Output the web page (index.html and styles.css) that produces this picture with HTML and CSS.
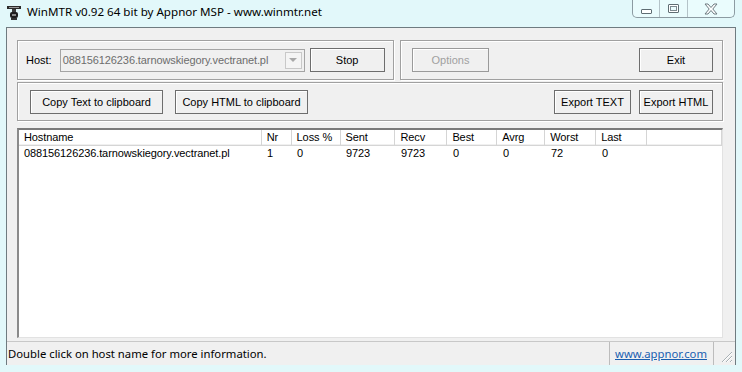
FILE: index.html
```html
<!DOCTYPE html>
<html lang="en">
<head>
  <meta charset="UTF-8" />
  <title>WinMTR v0.92 64 bit by Appnor MSP - www.winmtr.net</title>
  <link rel="stylesheet" href="styles.css">
</head>
<body>
  <div class="window">
    <div class="titlebar">
      <svg class="app-icon" width="16" height="16" viewBox="0 0 16 16">
        <rect x="1" y="2" width="14" height="3" fill="#2a2a2a"/>
        <rect x="3" y="3" width="10" height="1" fill="#9a9a9a"/>
        <rect x="6" y="5" width="4" height="3" fill="#3a3a3a"/>
        <rect x="4" y="8" width="8" height="6" rx="2" fill="#1e1e1e"/>
        <rect x="6" y="10" width="4" height="2" fill="#8a8a8a"/>
        <rect x="5" y="14" width="6" height="2" fill="#333"/>
      </svg>
      <span class="title">WinMTR v0.92 64 bit by Appnor MSP - www.winmtr.net</span>
      <div class="caption">
        <div class="cap min"><span class="min-glyph"></span></div>
        <div class="cap max"><span class="max-glyph"></span></div>
        <div class="cap close">
          <svg width="16" height="12" viewBox="0 0 16 12">
            <path d="M2 1 H5 L8 4.5 L11 1 H14 L9.8 6 L14 11 H11 L8 7.5 L5 11 H2 L6.2 6 Z" fill="#fff" stroke="#6d7a80" stroke-width="1"/>
          </svg>
        </div>
      </div>
    </div>

    <div class="client">
      <div class="row">
        <div class="group host-group">
          <span class="label">Host:</span>
          <div class="combo">
            <span class="combo-text">088156126236.tarnowskiegory.vectranet.pl</span>
            <span class="combo-btn"><span class="arrow"></span></span>
          </div>
          <button class="btn stop">Stop</button>
        </div>
        <div class="group opt-group">
          <button class="btn options" disabled>Options</button>
          <button class="btn exit">Exit</button>
        </div>
      </div>

      <div class="group copy-group">
        <button class="btn copy-text">Copy Text to clipboard</button>
        <button class="btn copy-html">Copy HTML to clipboard</button>
        <span class="spacer"></span>
        <button class="btn export-text">Export TEXT</button>
        <button class="btn export-html">Export HTML</button>
      </div>

      <div class="list">
        <div class="list-row list-head">
          <span class="c host">Hostname</span>
          <span class="c nr">Nr</span>
          <span class="c loss">Loss %</span>
          <span class="c sent">Sent</span>
          <span class="c recv">Recv</span>
          <span class="c best">Best</span>
          <span class="c avrg">Avrg</span>
          <span class="c worst">Worst</span>
          <span class="c last">Last</span>
          <span class="c rest"></span>
        </div>
        <div class="list-row">
          <span class="c host">088156126236.tarnowskiegory.vectranet.pl</span>
          <span class="c nr">1</span>
          <span class="c loss">0</span>
          <span class="c sent">9723</span>
          <span class="c recv">9723</span>
          <span class="c best">0</span>
          <span class="c avrg">0</span>
          <span class="c worst">72</span>
          <span class="c last">0</span>
        </div>
      </div>

      <div class="statusbar">
        <span class="status-text">Double click on host name for more information.</span>
        <span class="status-link"><a href="#">www.appnor.com</a></span>
        <svg class="grip" width="14" height="14" viewBox="0 0 14 14">
          <path d="M13 3 L3 13 M13 7 L7 13 M13 11 L11 13" stroke="#a8b0b4" stroke-width="1"/>
          <path d="M13 4 L4 13 M13 8 L8 13 M13 12 L12 13" stroke="#fff" stroke-width="1"/>
        </svg>
      </div>
    </div>
  </div>
</body>
</html>
```

FILE: styles.css
```css
body {
  margin: 0;
  background: #e4fafc;
  font-family: 'Liberation Sans', Arial, sans-serif;
}
.window {
  width: 742px;
  height: 372px;
  background: #e2f8fa;
  overflow: hidden;
}
.titlebar {
  height: 27px;
  display: flex;
  align-items: flex-start;
}
.app-icon {
  margin: 4px 0 0 6px;
}
.title {
  margin: 4px 0 0 5px;
  font-family: 'Noto Sans', sans-serif;
  font-size: 11.6px;
  color: #000;
}
.caption {
  margin-left: auto;
  margin-right: 7px;
  display: flex;
  height: 17px;
  border: 1px solid #8c9ba2;
  border-top: none;
  border-radius: 0 0 5px 5px;
  background: #eafcfd;
}
.cap {
  display: flex;
  align-items: center;
  justify-content: center;
}
.min { width: 26px; border-right: 1px solid #b4c3c8; }
.max { width: 27px; border-right: 1px solid #b4c3c8; }
.close { width: 46px; }
.min-glyph {
  width: 9px;
  height: 3px;
  margin-top: 6px;
  border: 1px solid #5f6d73;
  background: #fff;
  border-radius: 1px;
}
.max-glyph {
  width: 7px;
  height: 5px;
  border: 1px solid #5f6d73;
  box-shadow: inset 0 0 0 1px #fff, inset 0 0 0 2px #7d8a90;
  border-radius: 1px;
  padding: 1px;
}
.client {
  margin: 0 6px;
  height: 338px;
  background: #f0f0f0;
  border: 1px solid #6f7b80;
  border-bottom: none;
  padding: 12px 12px 0 10px;
  box-sizing: border-box;
  display: flex;
  flex-direction: column;
  font-size: 11px;
}
.row {
  display: flex;
  gap: 6px;
}
.group {
  height: 40px;
  box-sizing: border-box;
  border: 1px solid #a0a0a0;
  box-shadow: inset 1px 1px #fff, 1px 1px #fff;
  display: flex;
  align-items: center;
}
.host-group {
  width: 377px;
  padding: 0 6px 0 8px;
}
.opt-group {
  flex: 1;
  padding: 0 9px 0 11px;
  justify-content: space-between;
}
.copy-group {
  margin-top: 2px;
  padding: 0 9px 0 12px;
  gap: 12px;
}
.copy-group .export-html {
  margin-left: -4px;
}
.spacer {
  flex: 1;
}
.label {
  color: #000;
  margin-right: 8px;
}
.combo {
  width: 245px;
  height: 23px;
  box-sizing: border-box;
  border: 1px solid #a4a4a4;
  background: #f0f0f0;
  display: flex;
  align-items: center;
  padding-left: 2px;
  letter-spacing: -0.1px;
}
.combo-text {
  flex: 1;
  color: #6d6d6d;
}
.combo-btn {
  width: 17px;
  height: 17px;
  margin-right: 2px;
  box-sizing: border-box;
  border: 1px solid #c8c8c8;
  background: #f4f4f4;
  display: flex;
  align-items: center;
  justify-content: center;
}
.arrow {
  width: 0;
  height: 0;
  border-left: 4px solid transparent;
  border-right: 4px solid transparent;
  border-top: 4px solid #a8a8a8;
}
.btn {
  height: 24px;
  font-family: 'Liberation Sans', Arial, sans-serif;
  font-size: 11px;
  color: #000;
  background: #f0f0f0;
  border: 1px solid #6d6d6d;
  box-shadow: inset 1px 1px #fff;
  border-radius: 0;
  padding: 0;
}
.stop { width: 75px; margin-left: 5px; }
.options { width: 77px; color: #a0a0a0; border-color: #9a9a9a; }
.exit { width: 74px; }
.copy-text { width: 133px; }
.copy-html { width: 133px; }
.export-text { width: 77px; }
.export-html { width: 74px; }
.list {
  margin-top: 7px;
  height: 213px;
  box-sizing: border-box;
  background: #fff;
  border-top: 2px solid #7a7a7a;
  border-left: 2px solid #8a8a8a;
  border-right: 1px solid #e2e2e2;
  border-bottom: 1px solid #e2e2e2;
  letter-spacing: -0.1px;
}
.list-row {
  display: flex;
  height: 14px;
  align-items: center;
}
.list-head {
  height: 15px;
  border-bottom: 1px solid #d5d5d5;
  box-shadow: inset 0 -1px #f0f0f0;
}
.list-head .c {
  border-right: 1px solid #d5d5d5;
  height: 15px;
  line-height: 15px;
}
.c {
  box-sizing: border-box;
  padding-left: 5px;
  white-space: nowrap;
  overflow: hidden;
}
.host { width: 243px; }
.nr { width: 30px; }
.loss { width: 49px; }
.sent { width: 55px; }
.recv { width: 52px; }
.best { width: 50px; }
.avrg { width: 48px; }
.worst { width: 51px; }
.last { width: 51px; }
.rest { width: 75px; }
.statusbar {
  margin: 3px -12px 0 -10px;
  height: 23px;
  border-top: 1px solid #c8c8c8;
  display: flex;
  align-items: center;
  position: relative;
  font-family: 'Noto Sans', sans-serif;
  font-size: 11.3px;
}
.status-text {
  width: 601px;
  padding-left: 1px;
  color: #000;
  align-self: stretch;
  display: flex;
  align-items: center;
  border-right: 1px solid #bcbcbc;
}
.status-link {
  width: 104px;
  padding-left: 5px;
  align-self: stretch;
  display: flex;
  align-items: center;
  border-right: 1px solid #bcbcbc;
  box-sizing: border-box;
}
.status-link a {
  color: #1a5fb0;
  text-decoration: underline;
}
.grip {
  position: absolute;
  right: 2px;
  bottom: 2px;
}
```
